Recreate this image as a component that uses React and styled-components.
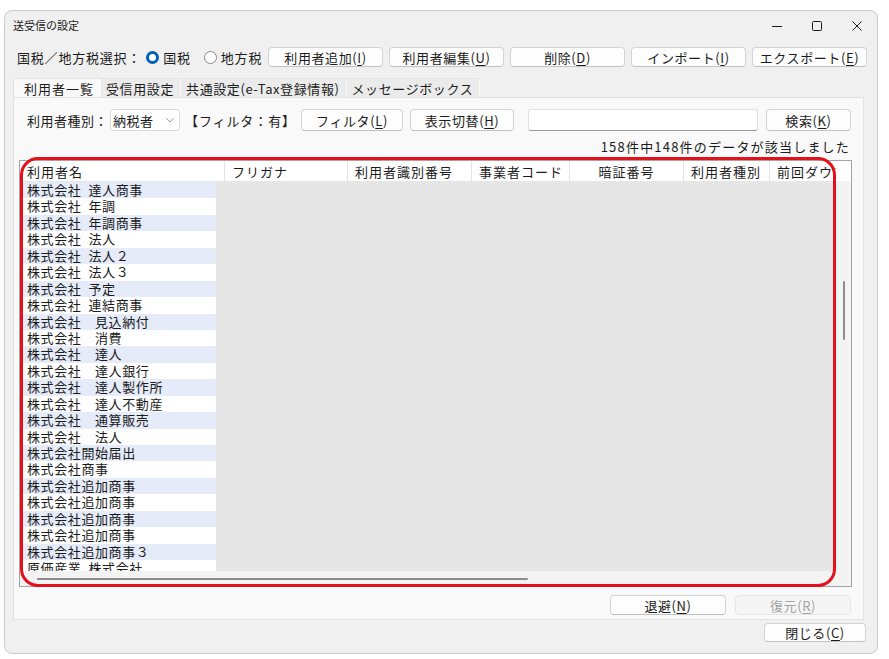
import React from 'react';
import styled, { createGlobalStyle } from 'styled-components';

const GlobalStyle = createGlobalStyle`
  html, body { margin: 0; padding: 0; background: #ffffff; }
  body {
    font-family: "Noto Sans CJK JP", "Noto Sans", sans-serif;
    color: #1b1b1b;
  }
  * { box-sizing: border-box; }
`;

const Window = styled.div`
  margin: 10px 0 0 4px;
  width: 874px;
  height: 644px;
  border: 1px solid #cacaca;
  border-radius: 8px;
  background: #f0f0f0;
  display: flex;
  flex-direction: column;
  font-size: 13px;
  line-height: 1;
  letter-spacing: 0.5px;
  overflow: hidden;
`;

const TitleBar = styled.div`
  height: 29px;
  display: flex;
  align-items: center;
  padding-left: 8px;
  font-size: 11px;
  letter-spacing: 0;
`;

const TitleText = styled.span`
  flex: 1;
`;

const WinButton = styled.div`
  width: 40px;
  height: 29px;
  display: flex;
  align-items: center;
  justify-content: center;
`;

const Toolbar = styled.div`
  margin-top: 7px;
  height: 20px;
  display: flex;
  align-items: center;
  padding: 0 10px 0 12px;
`;

const RadioGroup = styled.div`
  display: flex;
  align-items: center;
  white-space: nowrap;
  letter-spacing: 0.8px;
`;

const Radio = styled.span`
  width: 13px;
  height: 13px;
  border-radius: 50%;
  margin: 0 4px 0 ${p => (p.$on ? 5 : 13)}px;
  background: #ffffff;
  border: ${p => (p.$on ? '3.5px solid #005fb8' : '1px solid #8a8a8a')};
`;

const ButtonRow = styled.div`
  margin-left: auto;
  display: flex;
  gap: 6px;
`;

const Button = styled.button`
  width: ${p => p.$w || 115}px;
  height: ${p => p.$h || 20}px;
  padding: 0;
  font-family: inherit;
  font-size: 13px;
  letter-spacing: 0.6px;
  line-height: 1;
  color: ${p => (p.disabled ? '#a3a3a3' : '#1b1b1b')};
  background: ${p => (p.disabled ? '#f5f5f5' : '#fdfdfd')};
  border: 1px solid ${p => (p.disabled ? '#e6e6e6' : '#d3d3d3')};
  border-bottom-color: ${p => (p.disabled ? '#e6e6e6' : '#c2c2c2')};
  border-radius: 4px;
  display: flex;
  align-items: center;
  justify-content: center;
`;

const Key = styled.u`
  text-underline-offset: 2px;
`;

const Tabs = styled.div`
  margin: 11px 0 0 8px;
  height: 19px;
  display: flex;
  align-items: stretch;
`;

const Tab = styled.div`
  padding: 0 6px 0 ${p => (p.$active ? 10 : 5)}px;
  display: flex;
  align-items: center;
  background: ${p => (p.$active ? '#f9f9f9' : '#ebebeb')};
  border-top: 1px solid ${p => (p.$active ? '#e2e2e2' : '#e4e4e4')};
  border-left: ${p => (p.$active ? '1px solid #e2e2e2' : 'none')};
  border-right: 1px solid #f8f8f8;
  white-space: nowrap;
  letter-spacing: ${p => (p.$active ? '1px' : '0.6px')};
`;

const Panel = styled.div`
  margin: 0 13px 0 8px;
  height: 523px;
  background: #f9f9f9;
  border: 1px solid #e2e2e2;
  display: flex;
  flex-direction: column;
`;

const FilterRow = styled.div`
  margin-top: 11px;
  height: 22px;
  display: flex;
  align-items: center;
  padding-left: 13px;
  white-space: nowrap;
`;

const Select = styled.div`
  margin-left: 2px;
  width: 70px;
  height: 22px;
  background: #ffffff;
  border: 1px solid #dadada;
  border-radius: 3px;
  display: flex;
  align-items: center;
  padding: 0 5px 0 2px;
  justify-content: space-between;
`;

const FilterLabel = styled.span`
  margin: 0 5px 0 5px;
  letter-spacing: 0.9px;
`;

const TextBox = styled.div`
  width: 230px;
  height: 22px;
  margin: 0 8px 0 14px;
  background: #ffffff;
  border: 1px solid #e0e0e0;
  border-bottom: 1px solid #9a9a9a;
  border-radius: 3px;
`;

const CountLine = styled.div`
  margin-top: 9px;
  height: 16px;
  padding-right: 13px;
  text-align: right;
  letter-spacing: 1.2px;
`;

const GridWrap = styled.div`
  position: relative;
  margin: 4px 11px 0 5px;
  height: 427px;
`;

const Grid = styled.div`
  height: 100%;
  border: 1px solid #a3a3a3;
  background: #ffffff;
  display: grid;
  grid-template-columns: 1fr 15px;
  grid-template-rows: 20px 1fr 15px;
`;

const Header = styled.div`
  display: flex;
  background: #ffffff;
  overflow: hidden;
  white-space: nowrap;
`;

const Corner = styled.div`
  background: #ffffff;
`;

const HeadCell = styled.div`
  width: ${p => p.$w}px;
  flex: none;
  border-right: 1px solid #e3e3e3;
  display: flex;
  align-items: center;
  justify-content: ${p => (p.$center ? 'center' : 'flex-start')};
  padding-left: ${p => (p.$center ? 0 : 7)}px;
  letter-spacing: 1px;
`;

const Body = styled.div`
  background: #e6e6e6;
  overflow: hidden;
  padding-top: 1px;
`;

const NameCol = styled.div`
  width: 196px;
`;

const NameRow = styled.div`
  height: 16.45px;
  line-height: 16.45px;
  padding-left: 7px;
  background: ${p => (p.$alt ? '#e5ebf8' : '#ffffff')};
  white-space: pre;
  letter-spacing: 0.6px;
`;

const VScroll = styled.div`
  background: #f3f3f3;
  display: flex;
  justify-content: center;
  padding-top: 100px;
`;

const VThumb = styled.div`
  width: 2px;
  height: 59px;
  background: #8c8c8c;
  border-radius: 1px;
`;

const HScroll = styled.div`
  grid-column: 1 / 3;
  background: #f3f3f3;
  display: flex;
  align-items: center;
  padding-left: 17px;
`;

const HThumb = styled.div`
  width: 491px;
  height: 2px;
  background: #8c8c8c;
  border-radius: 1px;
`;

const Highlight = styled.div`
  position: absolute;
  left: 1px;
  top: -3px;
  width: 816px;
  height: 430px;
  border: 3px solid #e3111b;
  border-radius: 18px;
  pointer-events: none;
`;

const PanelButtons = styled.div`
  margin-top: 8px;
  display: flex;
  justify-content: flex-end;
  gap: 9px;
  padding-right: 12px;
`;

const FooterRow = styled.div`
  margin-top: 3px;
  display: flex;
  justify-content: flex-end;
  padding-right: 11px;
`;

const names = [
  '株式会社\u2002達人商事',
  '株式会社\u2002年調',
  '株式会社\u2002年調商事',
  '株式会社\u2002法人',
  '株式会社\u2002法人２',
  '株式会社\u2002法人３',
  '株式会社\u2002予定',
  '株式会社\u2002連結商事',
  '株式会社　見込納付',
  '株式会社　消費',
  '株式会社　達人',
  '株式会社　達人銀行',
  '株式会社　達人製作所',
  '株式会社　達人不動産',
  '株式会社　通算販売',
  '株式会社　法人',
  '株式会社開始届出',
  '株式会社商事',
  '株式会社追加商事',
  '株式会社追加商事',
  '株式会社追加商事',
  '株式会社追加商事',
  '株式会社追加商事３',
  '原価産業\u2002株式会社',
];

const columns = [
  { label: '利用者名', w: 205 },
  { label: 'フリガナ', w: 123 },
  { label: '利用者識別番号', w: 124 },
  { label: '事業者コード', w: 98 },
  { label: '暗証番号', w: 114, center: true },
  { label: '利用者種別', w: 86 },
  { label: '前回ダウンロード日時', w: 160 },
];

const Label = ({ text, k }) => (
  <>
    {text}(<Key>{k}</Key>)
  </>
);

export default function App() {
  return (
    <>
      <GlobalStyle />
      <Window>
        <TitleBar>
          <TitleText>送受信の設定</TitleText>
          <WinButton>
            <svg width="10" height="10" viewBox="0 0 10 10">
              <line x1="0" y1="5.5" x2="10" y2="5.5" stroke="#1b1b1b" strokeWidth="1" />
            </svg>
          </WinButton>
          <WinButton>
            <svg width="10" height="10" viewBox="0 0 10 10">
              <rect x="0.5" y="0.5" width="9" height="9" rx="1" fill="none" stroke="#1b1b1b" strokeWidth="1" />
            </svg>
          </WinButton>
          <WinButton>
            <svg width="10" height="10" viewBox="0 0 10 10">
              <path d="M0.5 0.5 L9.5 9.5 M9.5 0.5 L0.5 9.5" stroke="#1b1b1b" strokeWidth="1" />
            </svg>
          </WinButton>
        </TitleBar>

        <Toolbar>
          <RadioGroup>
            国税／地方税選択：
            <Radio $on />
            国税
            <Radio />
            地方税
          </RadioGroup>
          <ButtonRow>
            <Button><Label text="利用者追加" k="I" /></Button>
            <Button><Label text="利用者編集" k="U" /></Button>
            <Button><Label text="削除" k="D" /></Button>
            <Button><Label text="インポート" k="I" /></Button>
            <Button><Label text="エクスポート" k="E" /></Button>
          </ButtonRow>
        </Toolbar>

        <Tabs>
          <Tab $active>利用者一覧</Tab>
          <Tab>受信用設定</Tab>
          <Tab>共通設定(e-Tax登録情報)</Tab>
          <Tab>メッセージボックス</Tab>
        </Tabs>

        <Panel>
          <FilterRow>
            利用者種別：
            <Select>
              <span>納税者</span>
              <svg width="8" height="5" viewBox="0 0 8 5">
                <path d="M0.5 0.5 L4 4 L7.5 0.5" fill="none" stroke="#9a9a9a" strokeWidth="1" />
              </svg>
            </Select>
            <FilterLabel>【フィルタ：有】</FilterLabel>
            <Button $w={102} $h={22}><Label text="フィルタ" k="L" /></Button>
            <Button $w={104} $h={22} style={{ marginLeft: 7 }}><Label text="表示切替" k="H" /></Button>
            <TextBox />
            <Button $w={85} $h={22}><Label text="検索" k="K" /></Button>
          </FilterRow>

          <CountLine>158件中148件のデータが該当しました</CountLine>

          <GridWrap>
            <Grid>
              <Header>
                {columns.map(c => (
                  <HeadCell key={c.label} $w={c.w} $center={c.center}>{c.label}</HeadCell>
                ))}
              </Header>
              <Corner />
              <Body>
                <NameCol>
                  {names.map((n, i) => (
                    <NameRow key={i} $alt={i % 2 === 0}>{n}</NameRow>
                  ))}
                </NameCol>
              </Body>
              <VScroll><VThumb /></VScroll>
              <HScroll><HThumb /></HScroll>
            </Grid>
            <Highlight />
          </GridWrap>

          <PanelButtons>
            <Button $w={116}><Label text="退避" k="N" /></Button>
            <Button $w={116} disabled><Label text="復元" k="R" /></Button>
          </PanelButtons>
        </Panel>

        <FooterRow>
          <Button $w={102} $h={19}><Label text="閉じる" k="C" /></Button>
        </FooterRow>
      </Window>
    </>
  );
}
